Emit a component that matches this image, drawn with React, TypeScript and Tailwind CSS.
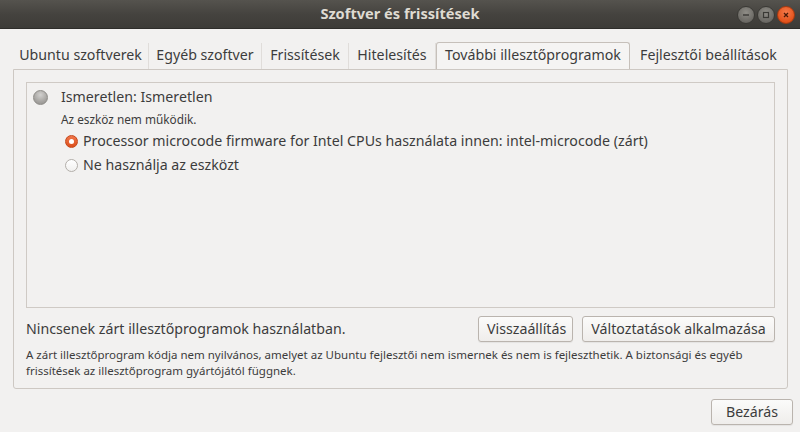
import React from 'react';

const font = { fontFamily: '"Noto Sans", "Open Sans", sans-serif' };

const tabs = [
  { name: 'Ubuntu szoftverek', w: 'w-[136px]' },
  { name: 'Egyéb szoftver', w: 'w-[113px]' },
  { name: 'Frissítések', w: 'w-[87px]' },
  { name: 'Hitelesítés', w: 'w-[87px]' },
  { name: 'További illesztőprogramok', w: 'w-[194px]', active: true },
  { name: 'Fejlesztői beállítások', w: 'w-[157px]' },
];

const TitleButton: React.FC<{ kind: 'min' | 'max' | 'close' }> = ({ kind }) => {
  const bg =
    kind === 'close'
      ? 'bg-[radial-gradient(circle_at_50%_35%,#f57a4a_0%,#e4521b_70%,#c8430f_100%)] border-[#a83a10]'
      : 'bg-[radial-gradient(circle_at_50%_35%,#8f8d87_0%,#6b6964_70%,#5a5853_100%)] border-[#3a3935]';
  return (
    <div className={`w-[18px] h-[18px] rounded-full border flex items-center justify-center ${bg}`}>
      <svg width="10" height="10" viewBox="0 0 10 10">
        {kind === 'min' && <path d="M2 5h6" stroke="#3a3935" strokeWidth="1.4" />}
        {kind === 'max' && <rect x="2.5" y="2.5" width="5" height="5" fill="none" stroke="#3a3935" strokeWidth="1.2" />}
        {kind === 'close' && <path d="M3 3l4 4M7 3l-4 4" stroke="#4a1a08" strokeWidth="1.3" />}
      </svg>
    </div>
  );
};

const Button: React.FC<{ children: React.ReactNode; className?: string }> = ({ children, className }) => (
  <button
    className={`h-[26px] rounded-[3px] border border-[#bab4ae] bg-[linear-gradient(#fbfbfa,#efedeb)] shadow-[0_1px_1px_rgba(0,0,0,0.06)] text-[14.2px] text-[#3c3c3c] px-[8px] leading-none ${className ?? ''}`}
  >
    {children}
  </button>
);

const App: React.FC = () => {
  return (
    <div style={font} className="w-[800px] h-[432px] bg-[#f2f1f0] flex flex-col overflow-hidden text-[#3c3c3c]">
      {/* title bar */}
      <div className="h-[29px] flex-shrink-0 relative flex items-center justify-center bg-[linear-gradient(#55534e,#45433f_50%,#3d3c38)] border-b border-[#2e2d2a]">
        <span className="text-[14.6px] font-bold text-[#dfdbd2]">Szoftver és frissítések</span>
        <div className="absolute right-[5px] top-[6px] flex gap-[2px]">
          <TitleButton kind="min" />
          <TitleButton kind="max" />
          <TitleButton kind="close" />
        </div>
      </div>

      {/* notebook */}
      <div className="mt-[13px] ml-[13px] w-[775px] flex flex-col">
        <div className="flex h-[27px] items-end">
          {tabs.map((t) =>
            t.active ? (
              <div
                key={t.name}
                className={`${t.w} h-[27px] flex items-center justify-center pb-[2px] rounded-t-[3px] border border-b-0 border-[#c6c0ba] bg-[#f5f4f3] text-[14.2px] whitespace-nowrap`}
              >
                {t.name}
              </div>
            ) : (
              <div
                key={t.name}
                className={`${t.w} h-[26px] flex items-center justify-center pb-[2px] border-r border-[#e0ddda] last:border-r-0 text-[14.2px] whitespace-nowrap`}
              >
                {t.name}
              </div>
            )
          )}
        </div>
        <div className="h-[320px] border border-[#cdc8c3] rounded-b-[3px] bg-[#f2f1f0] px-[12px] pt-[12px] flex flex-col">
          {/* device list */}
          <div className="h-[226px] border border-[#cfcac5] bg-[#f2f1f0] pt-[4px] flex flex-col">
            <div className="flex items-center h-[20px] pl-[6px]">
              <span className="w-[15px] h-[15px] rounded-full border border-[#8d8b87] bg-[radial-gradient(circle_at_50%_30%,#d2d1cf_0%,#a7a5a2_60%,#8f8d8a_100%)]" />
              <span className="ml-[13px] text-[14.2px]">Ismeretlen: Ismeretlen</span>
            </div>
            <div className="pl-[34px] mt-[3px] text-[11.8px] leading-[18px]">Az eszköz nem működik.</div>
            <div className="flex items-center h-[22px] pl-[38px] mt-[2px]">
              <span className="w-[13px] h-[13px] rounded-full border border-[#c5481b] bg-[linear-gradient(#f0764a,#dc4f1b)] flex items-center justify-center">
                <span className="w-[5px] h-[5px] rounded-full bg-white" />
              </span>
              <span className="ml-[5px] text-[14.2px] whitespace-nowrap">
                Processor microcode firmware for Intel CPUs használata innen: intel-microcode (zárt)
              </span>
            </div>
            <div className="flex items-center h-[22px] pl-[38px] mt-[2px]">
              <span className="w-[13px] h-[13px] rounded-full border border-[#b3afaa] bg-[linear-gradient(#ffffff,#f1f0ef)]" />
              <span className="ml-[5px] text-[14.2px]">Ne használja az eszközt</span>
            </div>
          </div>

          {/* status + buttons */}
          <div className="flex items-center mt-[8px] h-[26px]">
            <span className="text-[14.2px] flex-1">Nincsenek zárt illesztőprogramok használatban.</span>
            <Button className="w-[95px]">Visszaállítás</Button>
            <Button className="w-[193px] ml-[9px]">Változtatások alkalmazása</Button>
          </div>
          <p className="mt-[5px] text-[11.5px] leading-[16px] pr-[20px]">
            A zárt illesztőprogram kódja nem nyilvános, amelyet az Ubuntu fejlesztői nem ismernek és nem is fejleszthetik. A biztonsági és egyéb
            frissítések az illesztőprogram gyártójától függnek.
          </p>
        </div>
      </div>

      {/* close */}
      <div className="flex justify-end pr-[7px] mt-[10px]">
        <Button className="w-[82px] h-[26px]">Bezárás</Button>
      </div>
    </div>
  );
};

export default App;
